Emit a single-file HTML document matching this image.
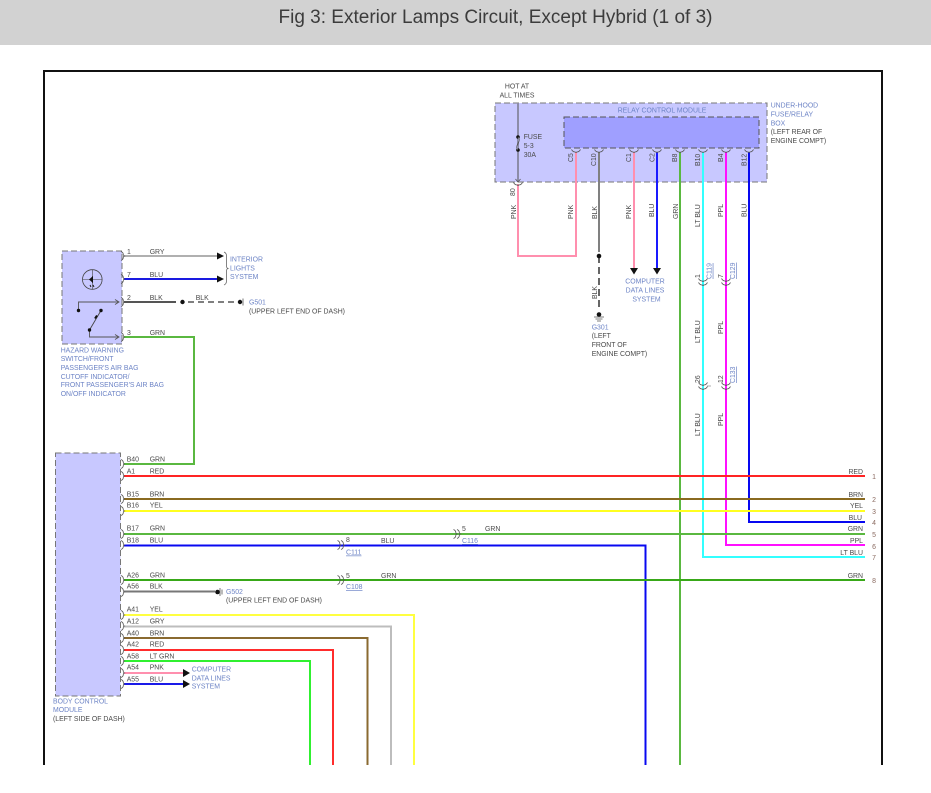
<!DOCTYPE html>
<html><head><meta charset="utf-8"><style>
html,body{margin:0;padding:0;background:#fff;width:931px;height:793px;overflow:hidden}
svg{display:block;position:absolute;left:0;top:0;filter:blur(.3px)}
#h{position:absolute;left:0;top:0;width:931px;height:45px;background:#d2d2d2}
#h span{position:absolute;left:278px;top:6px;width:435px;text-align:center;white-space:nowrap;font:19px/24px "Liberation Sans",sans-serif;color:#3c3c3c}
text{font-family:"Liberation Sans",sans-serif;font-size:6.9px;fill:#4a4a4a}
.b{fill:#6d84c6}
.n{fill:#8a6a60}
.u{fill:#6d84c6;text-decoration:underline}
.w{fill:none;stroke-width:2}
.c{fill:none;stroke:#555;stroke-width:.8}
</style></head><body>
<div id="h"><span>Fig 3: Exterior Lamps Circuit, Except Hybrid (1 of 3)</span></div>
<svg width="931" height="793" viewBox="0 0 931 793">
<defs>
<path id="r" class="c" d="M-1.5,-4.5Q.8,-3.5 .8,-1.5Q.8,-.3 1.8,0Q.8,.3 .8,1.5Q.8,3.5 -1.5,4.5"/>
<path id="t" class="c" d="M-4.5,-1.5Q-3,1 -1,1Q0,1 0,2Q0,1 1,1Q3,1 4.5,-1.5"/>
</defs>
<rect x="44" y="71" width="838" height="720" fill="none" stroke="#111" stroke-width="2"/>
<rect x="0" y="765" width="931" height="28" fill="#fff"/>

<!-- modules -->
<rect x="495" y="103" width="272" height="79" fill="#c8c8ff" stroke="#777" stroke-dasharray="6 3"/>
<rect x="564" y="117" width="195" height="31" fill="#9f9fff" stroke="#555" stroke-dasharray="6 3"/>
<rect x="62" y="251" width="60" height="93" fill="#c8c8ff" stroke="#777" stroke-dasharray="6 3"/>
<rect x="55.500" y="453" width="65" height="243" fill="#c8c8ff" stroke="#777" stroke-dasharray="6 3"/>

<!-- vertical wires top -->
<path class="w" stroke="#8c8ca8" d="M518 103V182"/>
<path class="w" stroke="#ff8fae" d="M518 184V256H576V152"/>
<path class="w" stroke="#808080" d="M599 152V252"/>
<path d="M599 256V311" fill="none" stroke="#666" stroke-width="2" stroke-dasharray="7 4"/>
<path class="w" stroke="#ff8fae" d="M634 152V268"/>
<path class="w" stroke="#1a1aff" d="M657 152V268"/>
<path class="w" stroke="#5ab840" d="M680 152V765"/>
<path class="w" stroke="#33ffff" d="M703 152V557H865"/>
<path class="w" stroke="#ff10ff" d="M726 152V545H865"/>
<path class="w" stroke="#0808f0" d="M749 152V522H865"/>
<path d="M630 268H638L634 274.500Z M653 268H661L657 274.500Z" fill="#111"/>
<circle cx="599" cy="256" r="2.300" fill="#111"/>
<circle cx="599" cy="314.500" r="2.300" fill="#111"/>
<path d="M594 317H604M595.500 319H602.500M597 321H601" stroke="#555" stroke-width=".7"/>

<!-- fuse -->
<circle cx="518" cy="137" r="1.800" fill="#111"/><circle cx="518" cy="150" r="1.800" fill="#111"/>
<path d="M518 137C522 141 514 146 518 150" fill="#c8c8ff" stroke="#555" stroke-width="1"/>
<path d="M515.500 179L518 182L520.500 179" fill="none" stroke="#555" stroke-width=".8"/>

<!-- top connectors -->
<use href="#t" x="518" y="184"/><use href="#t" x="576" y="151"/><use href="#t" x="599" y="151"/><use href="#t" x="634" y="151"/><use href="#t" x="657" y="151"/><use href="#t" x="680" y="151"/><use href="#t" x="703" y="151"/><use href="#t" x="726" y="151"/><use href="#t" x="749" y="151"/>
<use href="#t" x="703" y="280"/><use href="#t" x="703" y="284"/><use href="#t" x="726" y="280"/><use href="#t" x="726" y="284"/>
<use href="#t" x="703" y="384"/><use href="#t" x="703" y="388"/><use href="#t" x="726" y="384"/><use href="#t" x="726" y="388"/>
<path d="M707 386H711" stroke="#888" stroke-width=".7"/>

<!-- hazard switch wires -->
<path class="w" stroke="#b0b0b0" d="M124 256H218"/>
<path class="w" stroke="#1a1ae0" d="M124 279H218"/>
<path class="w" stroke="#555" d="M124 302H176"/>
<path d="M188 302H238" fill="none" stroke="#555" stroke-width="1.500" stroke-dasharray="6 4"/>
<circle cx="182.500" cy="302" r="2.200" fill="#111"/><circle cx="240" cy="302" r="2.200" fill="#111"/>
<path d="M243 298.500V305.500" stroke="#555" stroke-width=".8"/>
<path d="M217 252.500L224 256L217 259.500Z M217 275.500L224 279L217 282.500Z" fill="#111"/>
<path d="M224 252Q226.500 253 226.500 256V266Q226.500 268 228 268.500Q226.500 269 226.500 271V281Q226.500 284 224 285" fill="none" stroke="#666" stroke-width=".8"/>
<path class="w" stroke="#5ab840" d="M124 337H194V464H124"/>

<!-- hazard icon -->
<circle cx="92.300" cy="279.500" r="9.800" fill="none" stroke="#444" stroke-width=".8"/>
<path d="M82.500 279.500H102M92.300 270V289" stroke="#444" stroke-width=".6"/>
<path d="M89 279.500L93 276V283Z" fill="#111"/>
<path d="M90 285l1 2M93 285l1 2" stroke="#111" stroke-width=".9"/>
<path d="M78.500 310.500V302H118M115 299.500L119 302L115 304.500" fill="none" stroke="#555" stroke-width=".9"/>
<path d="M89.500 330L101 310.500" stroke="#444" stroke-width=".9"/>
<path d="M89.500 330V337H118M115 334.500L119 337L115 339.500" fill="none" stroke="#555" stroke-width=".9"/>
<circle cx="78.500" cy="310.500" r="1.700" fill="#111"/><circle cx="101" cy="310.500" r="1.700" fill="#111"/><circle cx="89.500" cy="330" r="1.700" fill="#111"/><path d="M97 315.500l-2 3" stroke="#111" stroke-width="2"/>

<!-- long horizontals -->
<path class="w" stroke="#ff2424" d="M124 476H865"/>
<path class="w" stroke="#8a6a20" d="M124 499H865"/>
<path class="w" stroke="#ffff20" d="M124 511H865"/>
<path class="w" stroke="#5ab840" d="M124 534H865"/>
<path class="w" stroke="#0808f0" d="M124 545.500H645.500V765"/>
<path class="w" stroke="#38a818" d="M124 580H865"/>
<path class="w" stroke="#777" d="M124 591.500H215"/>
<circle cx="217.500" cy="592" r="2.300" fill="#111"/>
<path d="M220 588V596M222 589.500V594.500" stroke="#555" stroke-width=".8"/>
<path class="w" stroke="#ffff40" d="M124 615H414V765"/>
<path class="w" stroke="#bdbdbd" d="M124 626.500H391V765"/>
<path class="w" stroke="#8a6a30" d="M124 638H367.500V765"/>
<path class="w" stroke="#ff2c2c" d="M124 650H333V765"/>
<path class="w" stroke="#30f030" d="M124 661H310V765"/>
<path class="w" stroke="#ff8fae" d="M124 673H183"/>
<path class="w" stroke="#1a1ae8" d="M124 684H183"/>
<path d="M183 669L190 673L183 677Z M183 680L190 684L183 688Z" fill="#111"/>

<!-- side connectors -->
<use href="#r" x="122.500" y="256"/><use href="#r" x="122.500" y="279"/><use href="#r" x="122.500" y="302"/><use href="#r" x="122.500" y="337"/>
<use href="#r" x="122.500" y="464"/><use href="#r" x="122.500" y="476"/><use href="#r" x="122.500" y="499"/><use href="#r" x="122.500" y="511"/><use href="#r" x="122.500" y="534"/><use href="#r" x="122.500" y="545"/><use href="#r" x="122.500" y="580"/><use href="#r" x="122.500" y="592"/><use href="#r" x="122.500" y="615"/><use href="#r" x="122.500" y="626"/><use href="#r" x="122.500" y="638"/><use href="#r" x="122.500" y="650"/><use href="#r" x="122.500" y="661"/><use href="#r" x="122.500" y="673"/><use href="#r" x="122.500" y="684"/>
<use href="#r" x="339" y="545"/><use href="#r" x="342.500" y="545"/><use href="#r" x="339" y="580"/><use href="#r" x="342.500" y="580"/><use href="#r" x="455" y="534"/><use href="#r" x="458.500" y="534"/>

<!-- top text -->
<text x="517" y="88.500" text-anchor="middle">HOT AT</text>
<text x="517" y="97.700" text-anchor="middle">ALL TIMES</text>
<text x="523.700" y="139">FUSE</text><text x="523.700" y="148">5-3</text><text x="523.700" y="157">30A</text>
<text class="b" x="617.700" y="112.700">RELAY CONTROL MODULE</text>
<text class="b" x="770.700" y="107.700">UNDER-HOOD</text><text class="b" x="770.700" y="116.700">FUSE/RELAY</text><text class="b" x="770.700" y="125.500">BOX</text>
<text x="770.700" y="134">(LEFT REAR OF</text><text x="770.700" y="143">ENGINE COMPT)</text>

<text transform="translate(573,162) rotate(-90)">C5</text>
<text transform="translate(596,166) rotate(-90)">C10</text>
<text transform="translate(631,162) rotate(-90)">C1</text>
<text transform="translate(654.300,162) rotate(-90)">C2</text>
<text transform="translate(677,162) rotate(-90)">B8</text>
<text transform="translate(700,166) rotate(-90)">B10</text>
<text transform="translate(723,162) rotate(-90)">B4</text>
<text transform="translate(746.700,166) rotate(-90)">B12</text>
<text transform="translate(515,196) rotate(-90)">80</text>
<text transform="translate(516,219) rotate(-90)">PNK</text>
<text transform="translate(573,219) rotate(-90)">PNK</text>
<text transform="translate(597,219) rotate(-90)">BLK</text>
<text transform="translate(631,219) rotate(-90)">PNK</text>
<text transform="translate(654,217) rotate(-90)">BLU</text>
<text transform="translate(678,219) rotate(-90)">GRN</text>
<text transform="translate(700,227) rotate(-90)">LT BLU</text>
<text transform="translate(723,217) rotate(-90)">PPL</text>
<text transform="translate(746.500,217) rotate(-90)">BLU</text>
<text transform="translate(597,299) rotate(-90)">BLK</text>
<text class="b" x="645" y="283.500" text-anchor="middle">COMPUTER</text><text class="b" x="645" y="292.500" text-anchor="middle">DATA LINES</text><text class="b" x="646.500" y="301.500" text-anchor="middle">SYSTEM</text>
<text class="b" x="591.700" y="329.500">G301</text><text x="591.700" y="338">(LEFT</text><text x="591.700" y="347">FRONT OF</text><text x="591.700" y="356">ENGINE COMPT)</text>

<text transform="translate(700,278) rotate(-90)">1</text>
<text transform="translate(723,278) rotate(-90)">7</text>
<text class="u" transform="translate(711.700,279) rotate(-90)">C119</text>
<text class="u" transform="translate(735,279) rotate(-90)">C129</text>
<text transform="translate(700,383) rotate(-90)">26</text>
<text transform="translate(723,383) rotate(-90)">12</text>
<text class="u" transform="translate(735,383) rotate(-90)">C133</text>
<text transform="translate(700,343) rotate(-90)">LT BLU</text>
<text transform="translate(723,334) rotate(-90)">PPL</text>
<text transform="translate(700,436) rotate(-90)">LT BLU</text>
<text transform="translate(723,426) rotate(-90)">PPL</text>

<!-- hazard text -->
<text x="127" y="254">1</text><text x="149.700" y="254">GRY</text>
<text x="127" y="277">7</text><text x="149.700" y="277">BLU</text>
<text x="127" y="300">2</text><text x="149.700" y="300">BLK</text><text x="195.700" y="300">BLK</text>
<text x="127" y="335">3</text><text x="149.700" y="335">GRN</text>
<text class="b" x="230" y="261.700">INTERIOR</text><text class="b" x="230" y="270.500">LIGHTS</text><text class="b" x="230" y="279">SYSTEM</text>
<text class="b" x="249" y="304.300">G501</text><text x="249" y="313.700">(UPPER LEFT END OF DASH)</text>
<text class="b" x="60.700" y="352.700">HAZARD WARNING</text><text class="b" x="60.700" y="361">SWITCH/FRONT</text><text class="b" x="60.700" y="370">PASSENGER'S AIR BAG</text><text class="b" x="60.700" y="379">CUTOFF INDICATOR/</text><text class="b" x="60.700" y="387">FRONT PASSENGER'S AIR BAG</text><text class="b" x="60.700" y="396">ON/OFF INDICATOR</text>

<!-- body text -->
<text x="126.700" y="461.700">B40</text><text x="149.700" y="461.700">GRN</text>
<text x="126.700" y="473.700">A1</text><text x="149.700" y="473.700">RED</text>
<text x="126.700" y="496.700">B15</text><text x="149.700" y="496.700">BRN</text>
<text x="126.700" y="507.700">B16</text><text x="149.700" y="507.700">YEL</text>
<text x="126.700" y="530.700">B17</text><text x="149.700" y="530.700">GRN</text>
<text x="126.700" y="542.700">B18</text><text x="149.700" y="542.700">BLU</text>
<text x="126.700" y="577.700">A26</text><text x="149.700" y="577.700">GRN</text>
<text x="126.700" y="588.700">A56</text><text x="149.700" y="588.700">BLK</text>
<text x="126.700" y="611.700">A41</text><text x="149.700" y="611.700">YEL</text>
<text x="126.700" y="623.700">A12</text><text x="149.700" y="623.700">GRY</text>
<text x="126.700" y="635.700">A40</text><text x="149.700" y="635.700">BRN</text>
<text x="126.700" y="646.700">A42</text><text x="149.700" y="646.700">RED</text>
<text x="126.700" y="658.700">A58</text><text x="149.700" y="658.700">LT GRN</text>
<text x="126.700" y="669.700">A54</text><text x="149.700" y="669.700">PNK</text>
<text x="126.700" y="681.700">A55</text><text x="149.700" y="681.700">BLU</text>
<text class="b" x="226" y="594">G502</text><text x="226" y="602.500">(UPPER LEFT END OF DASH)</text>
<text class="b" x="191.700" y="671.700">COMPUTER</text><text class="b" x="191.700" y="680.500">DATA LINES</text><text class="b" x="191.700" y="688.700">SYSTEM</text>
<text class="b" x="53" y="703.700">BODY CONTROL</text><text class="b" x="53" y="712">MODULE</text><text x="53" y="721">(LEFT SIDE OF DASH)</text>

<text x="346" y="542">8</text><text class="u" x="346" y="554.500">C111</text><text x="381" y="543">BLU</text>
<text x="346" y="578">5</text><text class="u" x="346" y="589">C108</text><text x="381" y="578">GRN</text>
<text x="462" y="531">5</text><text class="u" x="462" y="543">C116</text><text x="485" y="531">GRN</text>

<!-- right text -->
<text x="863" y="474" text-anchor="end">RED</text><text x="863" y="497" text-anchor="end">BRN</text><text x="863" y="508" text-anchor="end">YEL</text><text x="862" y="520" text-anchor="end">BLU</text><text x="863" y="531" text-anchor="end">GRN</text><text x="863" y="543" text-anchor="end">PPL</text><text x="863" y="555" text-anchor="end">LT BLU</text><text x="863" y="578" text-anchor="end">GRN</text>
<text class="n" x="874" y="479" text-anchor="middle">1</text><text class="n" x="874" y="502" text-anchor="middle">2</text><text class="n" x="874" y="514" text-anchor="middle">3</text><text class="n" x="874" y="525" text-anchor="middle">4</text><text class="n" x="874" y="537" text-anchor="middle">5</text><text class="n" x="874" y="549" text-anchor="middle">6</text><text class="n" x="874" y="560" text-anchor="middle">7</text><text class="n" x="874" y="583" text-anchor="middle">8</text>
</svg>
</body></html>
